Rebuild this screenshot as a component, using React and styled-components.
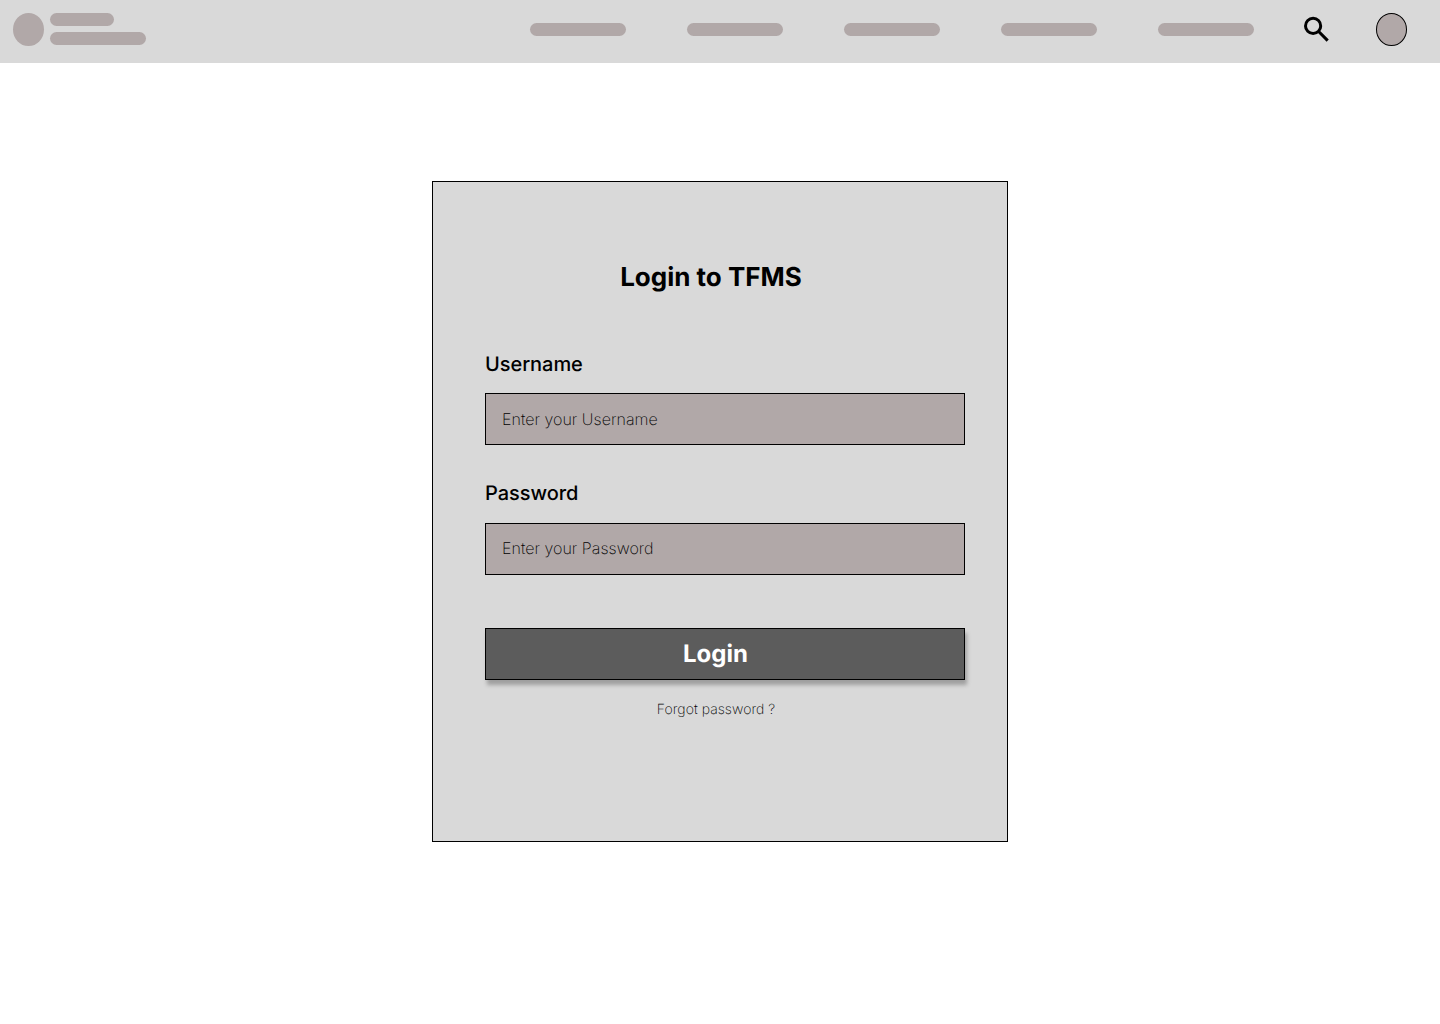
import React from "react";
import styled, { createGlobalStyle } from "styled-components";

const GlobalStyle = createGlobalStyle`
  *, *::before, *::after { box-sizing: border-box; }
  body { margin: 0; background: #ffffff; color: #000000; font-family: Inter, "Liberation Sans", sans-serif; text-rendering: geometricPrecision; }
`;

const Page = styled.div`
  min-height: 1024px;
  display: flex;
  flex-direction: column;
`;

const TopBar = styled.header`
  display: flex;
  align-items: flex-start;
  justify-content: space-between;
  height: 63px;
  padding: 13px 33px 0 13px;
  background: #d9d9d9;
`;

const Brand = styled.div`
  display: flex;
  gap: 6px;
`;

const BrandLines = styled.div`
  display: flex;
  flex-direction: column;
  gap: 6px;
`;

const Disc = styled.div`
  width: 31px;
  height: 33px;
  border-radius: 50%;
  background: #b1a8a8;
  border: ${({ $outlined }) => ($outlined ? "1px solid #000000" : "none")};
`;

const Pill = styled.div`
  width: ${({ $width }) => $width}px;
  height: 13px;
  border-radius: 7px;
  background: #b1a8a8;
`;

const Actions = styled.div`
  display: flex;
  align-items: center;
  height: 33px;
`;

const Nav = styled.nav`
  display: flex;
  gap: 61px;
`;

const SearchIcon = styled.svg`
  display: block;
  width: 34px;
  height: 33px;
  margin: 0 42px 0 46px;
  fill: none;
  stroke: #000000;
  stroke-width: 3;
`;

const Card = styled.main`
  width: 576px;
  height: 661px;
  margin: 118px auto 0;
  padding: 78px 42px 0 52px;
  background: #d9d9d9;
  border: 1px solid #000000;
`;

const Title = styled.h1`
  margin: 0 18px 0 0;
  padding-right: 10px;
  font-size: 26px;
  font-weight: 700;
  line-height: 36px;
  text-align: center;
`;

const Form = styled.form`
  display: flex;
  flex-direction: column;
  margin-top: 55px;
`;

const Field = styled.div`
  display: flex;
  flex-direction: column;
  gap: ${({ $labelGap }) => $labelGap}px;
  margin-bottom: ${({ $gap }) => $gap}px;
`;

const Label = styled.label`
  font-size: 20px;
  font-weight: 500;
  line-height: 26px;
  letter-spacing: -0.05px;
`;

const Input = styled.input`
  width: 480px;
  height: 52px;
  padding: 0 16px ${({ $lift = 0 }) => $lift}px;
  font: 200 16px/20px Inter, "Liberation Sans", sans-serif;
  letter-spacing: 0.04px;
  color: #000000;
  text-rendering: inherit;
  background: #b1a8a8;
  border: 1px solid #000000;
  border-radius: 0;
  outline: none;

  &::placeholder { color: #000000; opacity: 1; }
`;

const LoginButton = styled.button`
  width: 480px;
  height: 52px;
  padding: 0 19px 0 0;
  font: 700 24px/30px Inter, "Liberation Sans", sans-serif;
  color: #ffffff;
  text-rendering: inherit;
  background: #5c5c5c;
  border: 1px solid #000000;
  border-radius: 0;
  box-shadow: 2px 5px 4px rgba(0, 0, 0, 0.27);
`;

const ForgotLink = styled.a`
  align-self: center;
  margin: 20px 18px 0 0;
  font-size: 14px;
  font-weight: 200;
  line-height: 20px;
  letter-spacing: 0.05px;
`;

const NAV_ITEMS = [0, 1, 2, 3, 4];

export default function App() {
  return (
    <Page>
      <GlobalStyle />
      <TopBar>
        <Brand>
          <Disc />
          <BrandLines>
            <Pill $width={64} />
            <Pill $width={96} />
          </BrandLines>
        </Brand>
        <Actions>
          <Nav>
            {NAV_ITEMS.map((item) => (
              <Pill key={item} $width={96} />
            ))}
          </Nav>
          <SearchIcon viewBox="0 0 34 33" aria-hidden="true">
            <circle cx="13.1" cy="12.9" r="7.6" />
            <path d="M18.4 18.2 27.7 27.6" />
          </SearchIcon>
          <Disc $outlined />
        </Actions>
      </TopBar>
      <Card>
        <Title>Login to TFMS</Title>
        <Form>
          <Field $labelGap={16} $gap={35}>
            <Label htmlFor="username">Username</Label>
            <Input id="username" type="text" placeholder="Enter your Username" />
          </Field>
          <Field $labelGap={17} $gap={53}>
            <Label htmlFor="password">Password</Label>
            <Input id="password" type="password" placeholder="Enter your Password" $lift={2} />
          </Field>
          <LoginButton type="button">Login</LoginButton>
          <ForgotLink>Forgot password ?</ForgotLink>
        </Form>
      </Card>
    </Page>
  );
}
